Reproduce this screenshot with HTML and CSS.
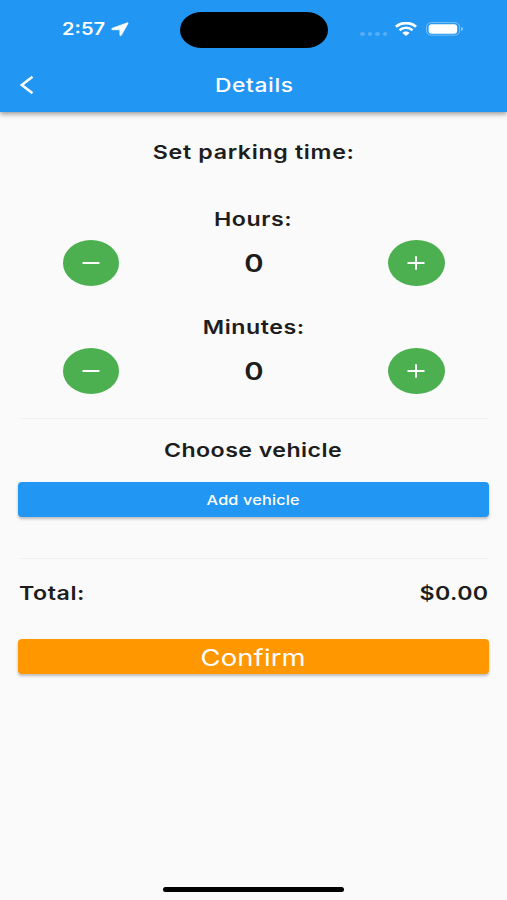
FILE: index.html
```html
<!DOCTYPE html>
<html lang="en">
<head>
<meta charset="utf-8">
<title>Details</title>
<link rel="stylesheet" href="styles.css">
</head>
<body>
<div class="screen">
  <header class="top">
    <div class="status">
      <div class="clock"><span class="wide time">2:57</span>
        <svg class="loc" width="18" height="15" viewBox="0 0 18 15"><path d="M16.200.800 1.200 6.200c-.9.400-.7 1.600.3 1.600h7.300v5c0 1.200 1.200 1.300 1.700.3L17 1.600c.3-.7-.1-1-.8-.8z" fill="#fff" stroke="#fff" stroke-width=".6"/></svg>
      </div>
      <div class="island"></div>
      <div class="signals">
        <div class="dots"><i></i><i></i><i></i><i></i></div>
        <svg class="wifi" width="22" height="14" viewBox="0 0 22 14" fill="none" stroke="#fff"><path d="M.9 4.700C6.500-.2 15.500-.2 21.100 4.700" stroke-width="2.700"/><path d="M4.500 8.200c3.700-3.200 9.300-3.200 13 0" stroke-width="2.500"/><path d="M7.400 10.900c2-1.800 5.200-1.800 7.200 0L11 13.900z" fill="#fff" stroke="none"/></svg>
        <svg class="battery" width="38" height="14" viewBox="0 0 38 14"><rect x=".6" y=".6" width="33" height="12.600" rx="4.500" fill="none" stroke="#fff" stroke-opacity=".4"/><rect x="2.600" y="2.200" width="28.600" height="9.500" rx="3" fill="#fff"/><path d="M35.200 4.800c2.400.8 2.400 3.400 0 4.200z" fill="#fff" fill-opacity=".5"/></svg>
      </div>
    </div>
    <nav class="bar">
      <svg class="back" width="16" height="20" viewBox="0 0 16 20"><path d="M13.500 1.800 2.800 10l10.700 8.200" fill="none" stroke="#fff" stroke-width="2.500"/></svg>
      <h1 class="wide title">Details</h1>
    </nav>
  </header>
  <main class="content">
    <h2 class="wide heading set">Set parking time:</h2>
    <section class="picker">
      <h3 class="wide heading hours">Hours:</h3>
      <div class="stepper">
        <button class="round" aria-label="Fewer hours"><svg width="20" height="16" viewBox="0 0 20 16"><path d="M1.500 8h17"/></svg></button>
        <span class="wide value">0</span>
        <button class="round" aria-label="More hours"><svg width="20" height="16" viewBox="0 0 20 16"><path d="M1.500 8h17M10 1.200v13.600"/></svg></button>
      </div>
    </section>
    <section class="picker">
      <h3 class="wide heading minutes">Minutes:</h3>
      <div class="stepper">
        <button class="round" aria-label="Fewer minutes"><svg width="20" height="16" viewBox="0 0 20 16"><path d="M1.500 8h17"/></svg></button>
        <span class="wide value">0</span>
        <button class="round" aria-label="More minutes"><svg width="20" height="16" viewBox="0 0 20 16"><path d="M1.500 8h17M10 1.200v13.600"/></svg></button>
      </div>
    </section>
    <hr class="rule first">
    <h2 class="wide heading choose">Choose vehicle</h2>
    <button class="action add"><span class="wide">Add vehicle</span></button>
    <hr class="rule second">
    <div class="total"><span class="wide heading left">Total:</span><span class="wide heading right">$0.00</span></div>
    <button class="action confirm"><span class="wide">Confirm</span></button>
  </main>
  <div class="home"></div>
</div>
</body>
</html>
```
FILE: styles.css
```css
* { box-sizing: border-box; }
body { margin: 0; font-family: Inter, sans-serif; color: #1d1d1d; background: #fafafa; }
h1, h2, h3, hr { margin: 0; }
button { border: 0; padding: 0; font-family: inherit; color: #fff; }
svg { display: block; }
.screen { width: 507px; height: 900px; display: flex; flex-direction: column; align-items: center; overflow: hidden; }
.wide { display: inline-block; transform: scaleX(1.22); white-space: nowrap; }

.top { width: 100%; height: 112px; flex: none; background: #2196f3; color: #fff; box-shadow: 0 2px 5px rgba(0,0,0,.4); }
.status { height: 58px; display: grid; grid-template-columns: 180px 148px 179px; align-items: center; }
.clock { display: flex; align-items: center; padding-left: 62px; }
.time { font-size: 17px; font-weight: 600; transform: scaleX(1.18); transform-origin: left; width: 49px; }
.island { height: 36px; border-radius: 22px / 18px; background: #000; margin-top: 1px; }
.signals { display: flex; align-items: center; padding-left: 32px; }
.dots { display: flex; gap: 3px; margin-top: 10px; }
.dots i { width: 4.500px; height: 4px; border-radius: 50%; background: #55adf6; }
.wifi { margin-left: 8px; }
.battery { margin-left: 9px; }
.bar { height: 54px; display: grid; grid-template-columns: 54px 1fr 54px; align-items: center; justify-items: center; }
.title { font-size: 18.700px; font-weight: 500; letter-spacing: .5px; line-height: 24px; padding: 1px 0 0 1px; }

.content { width: 471px; flex: 1; display: flex; flex-direction: column; align-items: center; padding-top: 29px; }
.heading { font-size: 19px; font-weight: 600; line-height: 24px; letter-spacing: .45px; }
.set { letter-spacing: .55px; margin-bottom: 43px; }
.picker { width: 382px; height: 108px; display: flex; flex-direction: column; align-items: center; gap: 8px; }
.stepper { width: 100%; display: flex; justify-content: space-between; align-items: center; }
.round { width: 56.500px; height: 46px; border-radius: 50%; background: #4caf50; display: grid; place-items: center; }
.round path { stroke: #fff; stroke-width: 2; fill: none; }
.value { font-size: 24px; font-weight: 600; line-height: 30px; padding-top: 2px; }
.rule { width: 100%; height: 1px; border: 0; background: #f2f2f2; flex: none; }
.first { margin-top: -6px; }
.choose { margin: 20px 0 19px; letter-spacing: .35px; }
.action { width: 471px; height: 35px; border-radius: 4px; flex: none; display: grid; place-items: center; box-shadow: 0 2px 3px rgba(0,0,0,.25); }
.add { background: #2196f3; font-size: 13.300px; font-weight: 500; letter-spacing: .15px; }
.second { margin: 41px 0 23px; }
.total { width: 100%; display: flex; justify-content: space-between; padding: 0 1px; margin-bottom: 33px; }
.left { transform-origin: left; }
.right { transform-origin: right; letter-spacing: .3px; }
.confirm { background: #ff9800; font-size: 22.500px; font-weight: 400; letter-spacing: .1px; }
.confirm .wide { padding-top: 1px; }
.home { width: 181px; height: 5px; border-radius: 3px; background: #000; margin-bottom: 8px; flex: none; }
```
